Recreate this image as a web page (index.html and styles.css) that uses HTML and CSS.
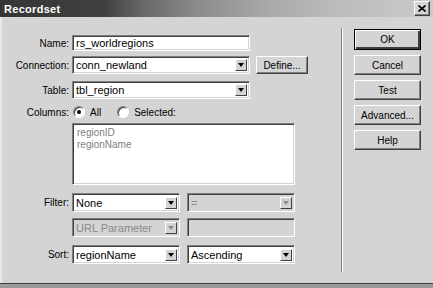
FILE: index.html
```html
<!DOCTYPE html>
<html lang="en">

<head>
    <meta charset="UTF-8">
    <title>Recordset</title>
    <link rel="stylesheet" href="styles.css">
</head>

<body>

    <div class="window">
        <div class="titlebar">
            <span class="title">Recordset</span>
            <span class="close">
                <svg width="8" height="7" viewBox="0 0 8 7">
                    <path d="M0.5 0.5 L7.5 6.5 M7.5 0.5 L0.5 6.5" stroke="#000" stroke-width="1.6" fill="none"/>
                </svg>
            </span>
        </div>

        <div class="content">
            <div class="form">
                <div class="row row-name">
                    <label>Name:</label>
                    <div class="field wide">rs_worldregions</div>
                </div>

                <div class="row row-conn">
                    <label>Connection:</label>
                    <div class="select wide">
                        <span class="value">conn_newland</span>
                        <span class="arrow"></span>
                    </div>
                    <button class="btn define">Define...</button>
                </div>

                <div class="row row-table">
                    <label>Table:</label>
                    <div class="select wide">
                        <span class="value">tbl_region</span>
                        <span class="arrow"></span>
                    </div>
                </div>

                <div class="row row-cols">
                    <label>Columns:</label>
                    <span class="radio checked"></span>
                    <span class="radio-label">All</span>
                    <span class="radio"></span>
                    <span class="radio-label">Selected:</span>
                </div>

                <div class="row row-list">
                    <label></label>
                    <div class="listbox">
                        <div>regionID</div>
                        <div>regionName</div>
                    </div>
                </div>

                <div class="row row-filter">
                    <label>Filter:</label>
                    <div class="select half">
                        <span class="value">None</span>
                        <span class="arrow"></span>
                    </div>
                    <div class="select half disabled">
                        <span class="value">=</span>
                        <span class="arrow"></span>
                    </div>
                </div>

                <div class="row row-param">
                    <label></label>
                    <div class="select half disabled">
                        <span class="value">URL Parameter</span>
                        <span class="arrow"></span>
                    </div>
                    <div class="field half disabled"></div>
                </div>

                <div class="row row-sort">
                    <label>Sort:</label>
                    <div class="select half">
                        <span class="value">regionName</span>
                        <span class="arrow"></span>
                    </div>
                    <div class="select half">
                        <span class="value">Ascending</span>
                        <span class="arrow"></span>
                    </div>
                </div>
            </div>

            <div class="separator"></div>

            <div class="actions">
                <button class="btn default">OK</button>
                <button class="btn">Cancel</button>
                <button class="btn">Test</button>
                <button class="btn">Advanced...</button>
                <button class="btn">Help</button>
            </div>
        </div>
    </div>

</body>

</html>
```

FILE: styles.css
```css
body {
    margin: 0;
    background-color: #9a9a9a;
    font-family: "Liberation Sans", Arial, sans-serif;
    font-size: 10px;
    color: #000;
}

.window {
    width: 433px;
    height: 284px;
    background-color: #d4d4d4;
    border-bottom: 1px solid #404040;
    box-sizing: border-box;
    box-shadow: inset 2px 0 0 #e8e8e8;
}

.titlebar {
    height: 17px;
    display: flex;
    align-items: center;
    justify-content: space-between;
    padding: 0 3px 0 4px;
    background: linear-gradient(to right, #363636 0%, #404040 24%, #686868 33%, #8a8a8a 45%, #a6a6a6 60%, #bcbcbc 78%, #cacaca 100%);
}

.title {
    color: #fff;
    font-weight: bold;
    font-size: 11px;
    letter-spacing: 0.3px;
}

.close {
    width: 14px;
    height: 13px;
    display: flex;
    align-items: center;
    justify-content: center;
    background-color: #d4d4d4;
    border: 1px solid;
    border-color: #fff #404040 #404040 #fff;
    box-shadow: inset -1px -1px 0 #808080;
}

.content {
    display: flex;
}

.form {
    width: 341px;
    padding-top: 18px;
}

.row {
    display: flex;
    align-items: center;
}

.row label {
    width: 69px;
    margin-right: 3px;
    text-align: right;
    flex-shrink: 0;
}

.row-conn {
    margin-top: 5px;
}

.row-table {
    margin-top: 7px;
}

.row-cols {
    margin-top: 6px;
    height: 14px;
}

.row-list {
    margin-top: 4px;
    align-items: flex-start;
}

.row-filter {
    margin-top: 8px;
}

.row-param {
    margin-top: 6px;
}

.row-sort {
    margin-top: 8px;
}

/* sunken boxes */
.field,
.select,
.listbox {
    box-sizing: border-box;
    background-color: #fff;
    border: 1px solid;
    border-color: #808080 #fff #fff #808080;
    box-shadow: inset 1px 1px 0 #404040, inset -1px -1px 0 #d4d4d4;
    padding: 0 3px;
    white-space: nowrap;
    overflow: hidden;
}

.field {
    height: 16px;
    line-height: 14px;
    font-size: 11px;
}

.wide {
    width: 178px;
}

.half {
    width: 108px;
}

.half + .half {
    margin-left: 7px;
}

.select {
    height: 18px;
    display: flex;
    align-items: center;
    justify-content: space-between;
    padding: 2px 2px 2px 3px;
    font-size: 11px;
}

.select .arrow {
    width: 12px;
    height: 12px;
    box-sizing: border-box;
    background-color: #d4d4d4;
    border: 1px solid;
    border-color: #fff #404040 #404040 #fff;
    display: flex;
    align-items: center;
    justify-content: center;
}

.select .arrow::after {
    content: "";
    border-left: 3px solid transparent;
    border-right: 3px solid transparent;
    border-top: 4px solid #000;
}

.row-filter .select,
.row-param .select,
.row-sort .select,
.row-filter .field,
.row-param .field {
    height: 19px;
}

.disabled {
    background-color: #d4d4d4;
    color: #8a8a8a;
}

.select.disabled .arrow::after {
    border-top-color: #8a8a8a;
}

.listbox {
    width: 223px;
    height: 62px;
    padding: 3px 4px;
    color: #808080;
    line-height: 12px;
}

.radio {
    width: 12px;
    height: 12px;
    box-sizing: border-box;
    border-radius: 50%;
    background-color: #fff;
    border: 1px solid;
    border-color: #808080 #fff #fff #808080;
    box-shadow: inset 1px 1px 0 #404040;
    display: flex;
    align-items: center;
    justify-content: center;
    margin-left: 1px;
}

.radio.checked::after {
    content: "";
    width: 4px;
    height: 4px;
    border-radius: 50%;
    background-color: #000;
}

.radio-label {
    margin-left: 5px;
    margin-right: 15px;
}

.separator {
    width: 1px;
    margin-top: 11px;
    height: 244px;
    background-color: #808080;
    border-right: 1px solid #fff;
}

.actions {
    display: flex;
    flex-direction: column;
    gap: 5px;
    padding: 12px 0 0 11px;
}

.btn {
    width: 67px;
    height: 20px;
    padding: 0;
    font-family: "Liberation Sans", Arial, sans-serif;
    font-size: 10px;
    color: #000;
    background-color: #d4d4d4;
    border: 1px solid;
    border-color: #fff #404040 #404040 #fff;
    box-shadow: inset -1px -1px 0 #808080;
}

.btn.default {
    height: 21px;
    border: 1px solid #000;
    box-shadow: inset 1px 1px 0 #fff, inset -2px -2px 0 #404040;
}

.btn.define {
    width: 52px;
    height: 18px;
    margin-left: 6px;
}
```
